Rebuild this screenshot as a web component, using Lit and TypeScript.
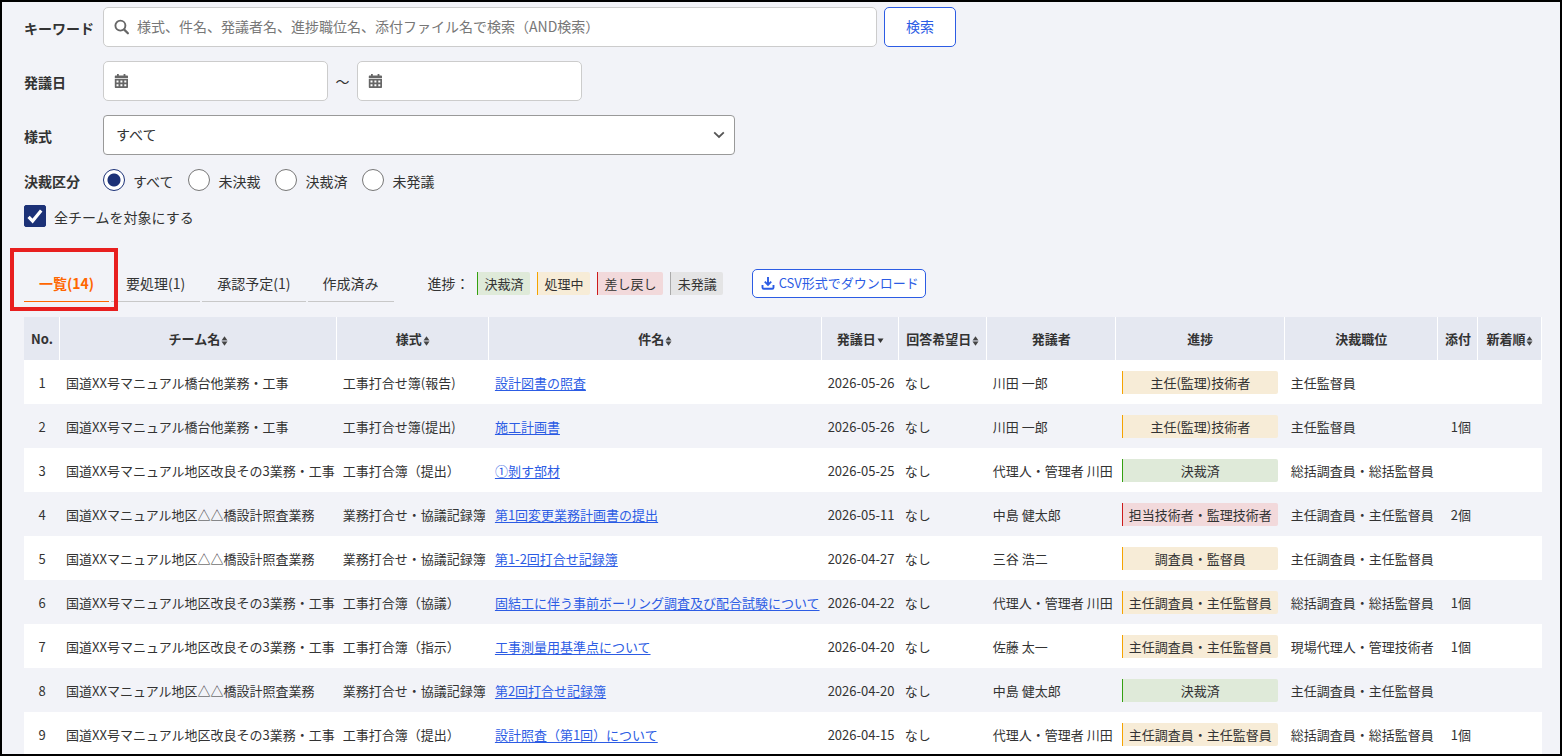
import { LitElement, html, css, svg } from "lit";
import { customElement, state } from "lit/decorators.js";
import { classMap } from "lit/directives/class-map.js";

type Tone = "done" | "active" | "returned" | "draft";

interface Item {
  team: string;
  form: string;
  title: string;
  date: string;
  author: string;
  progress: string;
  tone: Tone;
  approver: string;
  files: string;
}

const TEAM_A = "国道XX号マニュアル橋台他業務・工事";
const TEAM_B = "国道XX号マニュアル地区改良その3業務・工事";
const TEAM_C = "国道XXマニュアル地区△△橋設計照査業務";

const row = (
  team: string, form: string, title: string, date: string, author: string,
  progress: string, tone: Tone, approver: string, files = "",
): Item => ({ team, form, title, date, author, progress, tone, approver, files });

const ITEMS: Item[] = [
  row(TEAM_A, "工事打合せ簿(報告)", "設計図書の照査", "2026-05-26", "川田 一郎", "主任(監理)技術者", "active", "主任監督員"),
  row(TEAM_A, "工事打合せ簿(提出)", "施工計画書", "2026-05-26", "川田 一郎", "主任(監理)技術者", "active", "主任監督員", "1個"),
  row(TEAM_B, "工事打合簿（提出）", "①剝す部材", "2026-05-25", "代理人・管理者 川田", "決裁済", "done", "総括調査員・総括監督員"),
  row(TEAM_C, "業務打合せ・協議記録簿", "第1回変更業務計画書の提出", "2026-05-11", "中島 健太郎", "担当技術者・監理技術者", "returned", "主任調査員・主任監督員", "2個"),
  row(TEAM_C, "業務打合せ・協議記録簿", "第1-2回打合せ記録簿", "2026-04-27", "三谷 浩二", "調査員・監督員", "active", "主任調査員・主任監督員"),
  row(TEAM_B, "工事打合簿（協議）", "固結工に伴う事前ボーリング調査及び配合試験について", "2026-04-22", "代理人・管理者 川田", "主任調査員・主任監督員", "active", "総括調査員・総括監督員", "1個"),
  row(TEAM_B, "工事打合簿（指示）", "工事測量用基準点について", "2026-04-20", "佐藤 太一", "主任調査員・主任監督員", "active", "現場代理人・管理技術者", "1個"),
  row(TEAM_C, "業務打合せ・協議記録簿", "第2回打合せ記録簿", "2026-04-20", "中島 健太郎", "決裁済", "done", "主任調査員・主任監督員"),
  row(TEAM_B, "工事打合簿（提出）", "設計照査（第1回）について", "2026-04-15", "代理人・管理者 川田", "主任調査員・主任監督員", "active", "総括調査員・総括監督員", "1個"),
];

const COLUMNS: { key: string; label: string; sort?: "both" | "desc" }[] = [
  { key: "no", label: "No." },
  { key: "team", label: "チーム名", sort: "both" },
  { key: "form", label: "様式", sort: "both" },
  { key: "title", label: "件名", sort: "both" },
  { key: "date", label: "発議日", sort: "desc" },
  { key: "reply", label: "回答希望日", sort: "both" },
  { key: "author", label: "発議者" },
  { key: "progress", label: "進捗" },
  { key: "approver", label: "決裁職位" },
  { key: "files", label: "添付" },
  { key: "latest", label: "新着順", sort: "both" },
];

const LEGEND: { label: string; tone: Tone }[] = [
  { label: "決裁済", tone: "done" },
  { label: "処理中", tone: "active" },
  { label: "差し戻し", tone: "returned" },
  { label: "未発議", tone: "draft" },
];

const TABS = ["一覧(14)", "要処理(1)", "承認予定(1)", "作成済み"];
const STATUSES = ["すべて", "未決裁", "決裁済", "未発議"];

const searchIcon = html`<svg class="icon" viewBox="0 0 16 16" width="16" height="16" aria-hidden="true">
  <circle cx="6.4" cy="6.6" r="5" fill="none" stroke="currentColor" stroke-width="1.9" />
  <path d="M10.2 10.6l3.7 3.700" stroke="currentColor" stroke-width="2.2" stroke-linecap="round" />
</svg>`;

const calendarIcon = html`<svg class="icon" viewBox="0 0 16 16" width="16" height="16" aria-hidden="true">
  <path fill="currentColor" d="M3 1h1.800v1.400h4.800V1h1.800v1.400h1.600c.6 0 1 .4 1 1v1.800H.800V3.400c0-.6.4-1 1-1H3z" />
  <path fill="currentColor" fill-rule="evenodd" d="M.800 6h13.200v8c0 .6-.4 1-1 1H1.800c-.6 0-1-.4-1-1zM2.500 7.400v2h2v-2zm3.900 0v2h2v-2zm3.900 0v2h2v-2zM2.500 11.200v2h2v-2zm3.900 0v2h2v-2zm3.900 0v2h2v-2z" />
</svg>`;

const downloadIcon = html`<svg viewBox="0 0 14 14" width="14" height="14" aria-hidden="true">
  <path d="M7 1v7.500M3.800 5.700L7 8.900l3.200-3.200M1.500 9v2.500c0 .8.500 1.300 1.300 1.300h8.400c.8 0 1.300-.5 1.300-1.300V9"
    fill="none" stroke="currentColor" stroke-width="1.900" />
</svg>`;

const sortIcon = (kind: "both" | "desc") => html`<svg class="sort" viewBox="0 0 8 12" width="8" height="12" aria-hidden="true">
  ${kind === "both"
    ? svg`<path d="M4.500 1.200l2.800 4H1.700z" fill="#444" /><path d="M1.700 5.200h5.600v1.600H1.700z" fill="#999ba3" /><path d="M4.500 10.800l2.800-4H1.700z" fill="#444" />`
    : svg`<path d="M1.500 3.500h6L4.500 8z" fill="#333" />`}
</svg>`;

@customElement("app-root")
export class AppRoot extends LitElement {
  @state() private status = STATUSES[0];
  @state() private tab = 0;

  static styles = css`
    :host {
      display: block;
      box-sizing: border-box;
      height: 100vh;
      overflow: hidden;
      padding: 5px 18px 0 22px;
      border: 2px solid #000;
      background: #f2f3f8;
      color: #333;
      font: 14px/22px "Noto Sans CJK JP", sans-serif;
    }
    *, *::before, *::after { box-sizing: border-box; }
    input, select, button { font: inherit; color: inherit; margin: 0; }

    .filters { display: flex; flex-direction: column; gap: 14px; }
    .line { display: flex; align-items: center; }
    .caption { flex: none; width: 79px; font-weight: 700; white-space: nowrap; }

    .field { position: relative; display: flex; min-width: 0; }
    .field .icon {
      position: absolute; left: 11px; top: 12px;
      color: #666; pointer-events: none;
    }
    .keyword { width: 774px; }
    .day { width: 225px; }
    .kind { width: 632px; }
    .box {
      width: 100%; height: 40px; padding: 0 12px 2px 33px;
      border: 1px solid #ccc; border-radius: 5px; background: #fff;
    }
    .box::placeholder { color: #777; opacity: 1; }
    .select {
      width: 100%; height: 40px; padding: 0 32px 2px 12px;
      border: 1px solid #999; border-radius: 4px; background: #fff;
      appearance: none;
    }
    .chevron { position: absolute; right: 10px; top: 14px; pointer-events: none; }
    .tilde { width: 29px; text-align: center; }
    .search {
      flex: none; width: 72px; height: 40px; margin-left: 7px; padding: 0 0 2px;
      border: 1px solid #2c5ce4; border-radius: 5px; background: #fff; color: #2c5ce4;
    }

    .radios { display: flex; gap: 15px; }
    .choice { display: flex; align-items: center; gap: 8px; height: 22px; white-space: nowrap; }
    .caption, .choice-text { padding-top: 1px; line-height: 20px; }
    .radio, .check { appearance: none; flex: none; width: 22px; height: 22px; background: #fff; }
    .radio { border: 1px solid #777; border-radius: 50%; }
    .radio:checked {
      border-color: #1c3177;
      background: radial-gradient(circle, #1c3177 6px, #fff 7px);
    }
    .check { border: 1px solid #1c3177; border-radius: 2px; }
    .check:checked { background: #1c3177; }
    .check-box { position: relative; display: flex; }
    .tick { position: absolute; left: 2px; top: 2px; pointer-events: none; }
    .check:not(:checked) + .tick { display: none; }

    .toolbar { display: flex; align-items: center; margin-top: 37px; height: 38px; }
    .tabs { display: flex; gap: 2px; height: 100%; }
    .tab {
      position: relative; padding: 0 15px; border: 0;
      border-bottom: 1px solid #c8c8c8; background: none; white-space: nowrap;
    }
    .tab.current { border-color: #ff6600; color: #ff6600; font-weight: 700; }
    .marker {
      position: absolute; inset: -16px -9px -10px -14px;
      border: 4px solid #e81f1f; pointer-events: none; z-index: 1;
    }
    .legend { display: flex; align-items: center; gap: 7px; margin-left: 34px; }
    .legend-title { white-space: nowrap; }
    .badge {
      display: block; height: 23px; padding: 0 6px 0 7px;
      border-left: 1px solid; border-radius: 0 2px 2px 0;
      font-size: 13px; line-height: 24px; text-align: center; white-space: nowrap;
    }
    .badge.done { background: #dfead9; border-color: #34a010; }
    .badge.active { background: #f7ecd7; border-color: #f5a300; }
    .badge.returned { background: #f2d9db; border-color: #cc1b1b; }
    .badge.draft { background: #e4e4e5; border-color: #aaa; }
    .csv {
      display: flex; align-items: center; gap: 4px;
      height: 29px; margin-left: 29px; padding: 0 6px 0 8px;
      border: 1px solid #2c5ce4; border-radius: 5px; background: #fff; color: #2c5ce4;
      font-size: 13px; white-space: nowrap;
    }

    .list {
      width: 100%; margin-top: 15px; border-collapse: separate; border-spacing: 0;
      font-size: 13px; line-height: 22px; white-space: nowrap;
    }
    .list th {
      height: 43px; padding: 0 2px 0 3px; background: #e5e8f1;
      border-right: 1px solid #fff; font-weight: 700;
    }
    .list td { height: 44px; padding: 2px 2px 0 6px; text-align: left; }
    .list tbody tr:nth-child(odd) { background: #fff; }
    .list td.center { text-align: center; padding-left: 2px; }
    .list td.status { padding: 0 7px 0 6px; }
    .list td.status .badge { padding: 0 4px; }
    .list td.files { text-align: right; padding-right: 7px; }
    .list a { color: #2c5ce4; text-decoration: underline; text-underline-offset: 2px; }
    .sort { display: inline-block; vertical-align: -3px; }
    .col-no { width: 36px; }
    .col-team { width: 276px; }
    .col-form { width: 152px; }
    .col-title { width: 332px; }
    .col-date { width: 77px; }
    .col-reply { width: 88px; }
    .col-author { width: 129px; }
    .col-progress { width: 169px; }
    .col-approver { width: 153px; }
    .col-files { width: 40px; }
    .col-latest { width: 64px; }
  `;

  private renderFilters() {
    return html`<form class="filters" @submit=${(e: Event) => e.preventDefault()}>
      <div class="line">
        <label class="caption" for="keyword">キーワード</label>
        <div class="field keyword">
          ${searchIcon}
          <input class="box" id="keyword" type="text"
            placeholder="様式、件名、発議者名、進捗職位名、添付ファイル名で検索（AND検索）" />
        </div>
        <button class="search">検索</button>
      </div>
      <div class="line">
        <label class="caption" for="from">発議日</label>
        <div class="field day">${calendarIcon}<input class="box" id="from" type="text" /></div>
        <span class="tilde">～</span>
        <div class="field day">${calendarIcon}<input class="box" type="text" aria-label="発議日（終了）" /></div>
      </div>
      <div class="line">
        <label class="caption" for="kind">様式</label>
        <div class="field kind">
          <select class="select" id="kind"><option>すべて</option></select>
          <svg class="chevron" viewBox="0 0 12 12" width="12" height="12" aria-hidden="true">
            <path d="M1.200 3.400L6 8l4.800-4.600" fill="none" stroke="#555" stroke-width="1.800" />
          </svg>
        </div>
      </div>
      <div class="line" role="radiogroup" aria-labelledby="status-caption">
        <span class="caption" id="status-caption">決裁区分</span>
        <div class="radios">
          ${STATUSES.map((name) => html`<label class="choice">
            <input class="radio" type="radio" name="status" .checked=${this.status === name}
              @change=${() => (this.status = name)} /><span class="choice-text">${name}</span>
          </label>`)}
        </div>
      </div>
      <label class="choice">
        <span class="check-box">
          <input class="check" type="checkbox" checked />
          <svg class="tick" viewBox="0 0 18 18" width="18" height="18" aria-hidden="true">
            <path d="M2.600 9.800l4 4.200L15.200 3.400" fill="none" stroke="#fff" stroke-width="3.200" />
          </svg>
        </span>
        <span class="choice-text">全チームを対象にする</span>
      </label>
    </form>`;
  }

  private renderToolbar() {
    return html`<div class="toolbar">
      <div class="tabs" role="tablist">
        ${TABS.map((name, i) => html`<button role="tab" aria-selected=${i === this.tab}
          class=${classMap({ tab: true, current: i === this.tab })}
          @click=${() => (this.tab = i)}>${name}${i === 0 ? html`<span class="marker"></span>` : ""}</button>`)}
      </div>
      <div class="legend">
        <span class="legend-title">進捗：</span>
        ${LEGEND.map((l) => html`<span class="badge ${l.tone}">${l.label}</span>`)}
      </div>
      <button class="csv">${downloadIcon}<span>CSV形式でダウンロード</span></button>
    </div>`;
  }

  private renderTable() {
    return html`<table class="list">
      <colgroup>${COLUMNS.map((c) => html`<col class="col-${c.key}" />`)}</colgroup>
      <thead>
        <tr>${COLUMNS.map((c) => html`<th scope="col">${c.label}${c.sort ? sortIcon(c.sort) : ""}</th>`)}</tr>
      </thead>
      <tbody>
        ${ITEMS.map((item, i) => html`<tr>
          <td class="center">${i + 1}</td>
          <td>${item.team}</td>
          <td>${item.form}</td>
          <td><a href="#">${item.title}</a></td>
          <td>${item.date}</td>
          <td>なし</td>
          <td>${item.author}</td>
          <td class="status"><span class="badge ${item.tone}">${item.progress}</span></td>
          <td>${item.approver}</td>
          <td class="files">${item.files}</td>
          <td></td>
        </tr>`)}
      </tbody>
    </table>`;
  }

  render() {
    return html`${this.renderFilters()}${this.renderToolbar()}${this.renderTable()}`;
  }
}
